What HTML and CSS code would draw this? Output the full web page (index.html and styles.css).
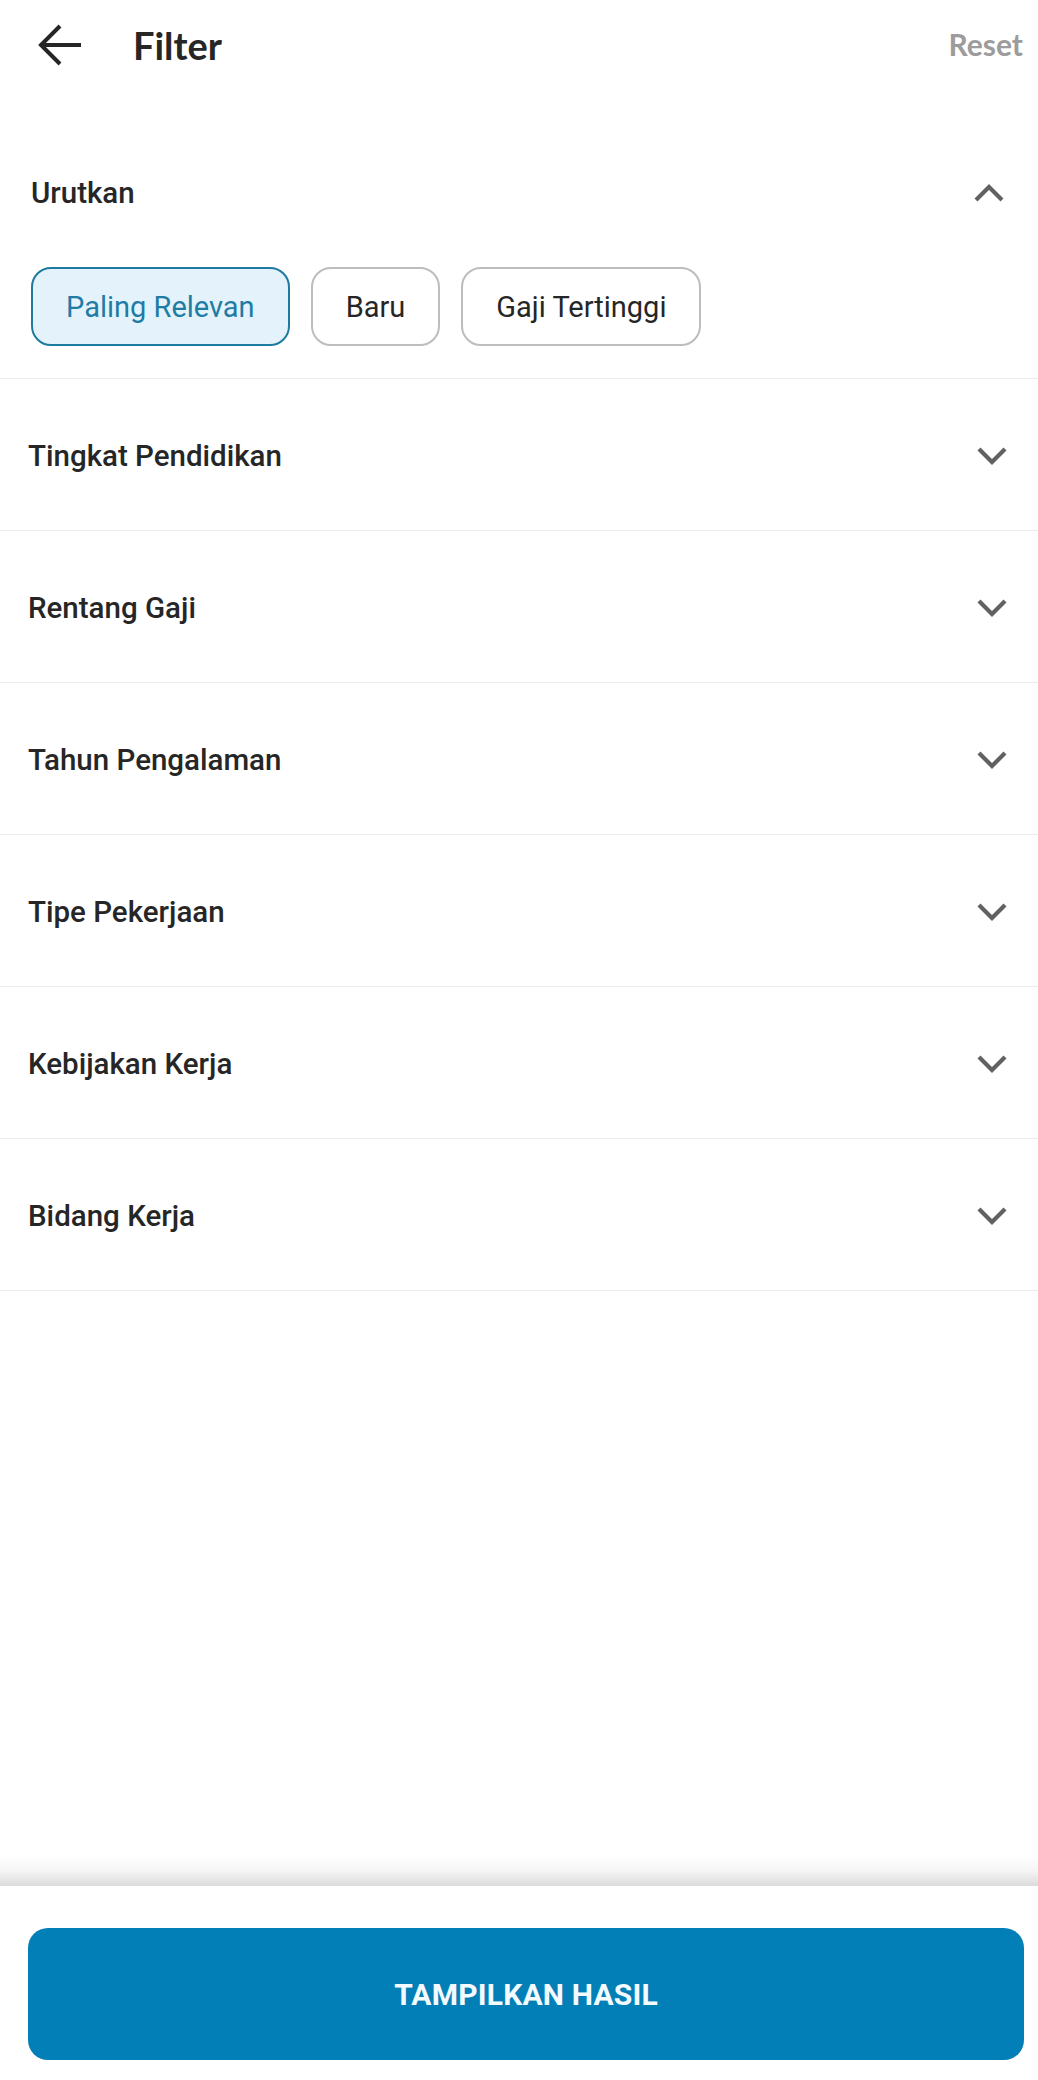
FILE: index.html
```html
<!DOCTYPE html>
<html lang="id">
<head>
<meta charset="utf-8">
<title>Filter</title>
<link rel="stylesheet" href="styles.css">
</head>
<body>
<div class="screen">
  <header class="topbar">
    <button class="back" aria-label="Kembali">
      <svg width="44" height="42" viewBox="0 0 44 42"><path d="M44 21H5M23 2L4 21L23 40" fill="none" stroke="#262626" stroke-width="4"/></svg>
    </button>
    <h1 class="title">Filter</h1>
    <span class="reset">Reset</span>
  </header>

  <main class="content">
    <section class="sort">
      <div class="sort-head">
        <span class="label">Urutkan</span>
        <svg class="chev" width="32" height="20" viewBox="0 0 32 20"><path d="M3 17L16 4L29 17" fill="none" stroke="#616161" stroke-width="4.2"/></svg>
      </div>
      <div class="chips">
        <span class="chip chip-on">Paling Relevan</span>
        <span class="chip">Baru</span>
        <span class="chip">Gaji Tertinggi</span>
      </div>
    </section>

    <div class="row"><span class="label">Tingkat Pendidikan</span><svg class="chev" width="32" height="20" viewBox="0 0 32 20"><path d="M3 3L16 16L29 3" fill="none" stroke="#616161" stroke-width="4.2"/></svg></div>
    <div class="row"><span class="label">Rentang Gaji</span><svg class="chev" width="32" height="20" viewBox="0 0 32 20"><path d="M3 3L16 16L29 3" fill="none" stroke="#616161" stroke-width="4.2"/></svg></div>
    <div class="row"><span class="label">Tahun Pengalaman</span><svg class="chev" width="32" height="20" viewBox="0 0 32 20"><path d="M3 3L16 16L29 3" fill="none" stroke="#616161" stroke-width="4.2"/></svg></div>
    <div class="row"><span class="label">Tipe Pekerjaan</span><svg class="chev" width="32" height="20" viewBox="0 0 32 20"><path d="M3 3L16 16L29 3" fill="none" stroke="#616161" stroke-width="4.2"/></svg></div>
    <div class="row"><span class="label">Kebijakan Kerja</span><svg class="chev" width="32" height="20" viewBox="0 0 32 20"><path d="M3 3L16 16L29 3" fill="none" stroke="#616161" stroke-width="4.2"/></svg></div>
    <div class="row"><span class="label">Bidang Kerja</span><svg class="chev" width="32" height="20" viewBox="0 0 32 20"><path d="M3 3L16 16L29 3" fill="none" stroke="#616161" stroke-width="4.2"/></svg></div>
  </main>

  <footer class="bottombar">
    <button class="apply">TAMPILKAN HASIL</button>
  </footer>
</div>
</body>
</html>
```
FILE: styles.css
```css
* { box-sizing: border-box; }

html, body {
  margin: 0;
  padding: 0;
  background: #ffffff;
}

body {
  font-family: Roboto, "Liberation Sans", Arial, sans-serif;
  color: #262626;
}

.screen {
  height: 100vh;
  display: flex;
  flex-direction: column;
}

/* top app bar */
.topbar {
  height: 90px;
  flex: none;
  display: flex;
  align-items: center;
  padding: 0 15px 0 37px;
}

.back {
  border: 0;
  background: none;
  padding: 0;
  width: 44px;
  height: 42px;
  display: flex;
  margin-top: -1px;
}

.title {
  margin: 0 0 0 52px;
  font-family: Lato, "Open Sans", sans-serif;
  font-weight: 700;
  font-size: 38px;
  line-height: 44px;
  color: #262626;
  flex: 1;
}

.reset {
  font-family: Lato, "Open Sans", sans-serif;
  font-weight: 700;
  font-size: 30px;
  color: #9c9c9c;
  margin-top: -2px;
}

.content {
  flex: 1;
}

.label {
  font-size: 29.5px;
  font-weight: 500;
  line-height: 40px;
  color: #262626;
}

/* sort section */
.sort {
  padding: 83px 33px 32px 31px;
  border-bottom: 1px solid #ececec;
}

.sort-head {
  display: flex;
  align-items: center;
  justify-content: space-between;
}

.chips {
  display: flex;
  gap: 21px;
  margin-top: 54px;
}

.chip {
  height: 79px;
  display: flex;
  align-items: center;
  padding: 0 33px;
  border: 2px solid #bdbdbd;
  border-radius: 20px;
  font-size: 29px;
  font-weight: 400;
  color: #262626;
}

.chip-on {
  background: #e4f3fb;
  border-color: #1f7aa0;
  color: #1e7ca5;
}

/* collapsed filter rows */
.row {
  height: 152px;
  display: flex;
  align-items: center;
  justify-content: space-between;
  padding: 2px 30px 0 28px;
  border-bottom: 1px solid #ececec;
}

.chev {
  flex: none;
}

/* bottom action bar */
.bottombar {
  flex: none;
  height: 194px;
  position: relative;
  background: #ffffff;
  padding: 42px 14px 0 28px;
}

.bottombar::before {
  content: "";
  position: absolute;
  left: 0;
  right: 0;
  top: -30px;
  height: 30px;
  background: linear-gradient(to bottom, rgba(0, 0, 0, 0), rgba(0, 0, 0, 0.04) 50%, rgba(0, 0, 0, 0.14));
}

.apply {
  width: 100%;
  height: 132px;
  border: 0;
  border-radius: 20px;
  background: #037fb8;
  color: #f3fbff;
  font-family: Roboto, "Liberation Sans", Arial, sans-serif;
  font-weight: 700;
  font-size: 30px;
  letter-spacing: 0.2px;
}
```
